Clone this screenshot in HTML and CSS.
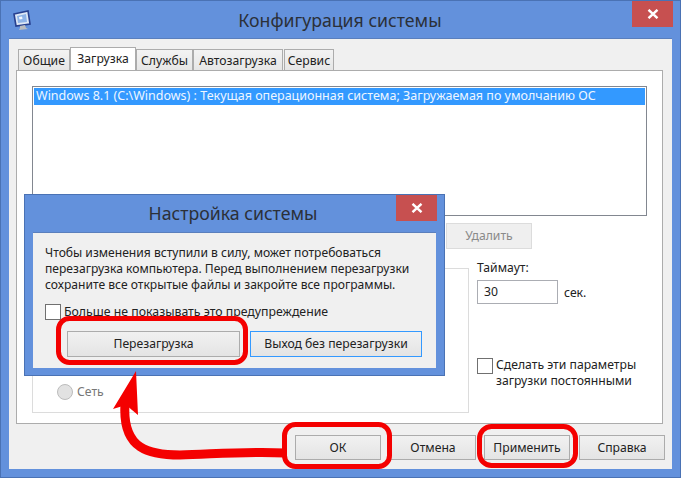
FILE: index.html
```html
<!DOCTYPE html>
<html lang="ru">
<head>
<meta charset="utf-8">
<title>Конфигурация системы</title>
<link rel="stylesheet" href="styles.css">
</head>
<body>
<div class="desktop">
  <div class="window">
    <div class="titlebar">
      <svg class="app-icon" width="18" height="22" viewBox="0 0 18 22">
        <path d="M1 5 L15 2 L17 15 L3 17 Z" fill="#dfe8f5" stroke="#27408f" stroke-width="1.6"/>
        <path d="M4 7 L13 5 L14 13 L5 14 Z" fill="#8fb4e8"/>
        <path d="M6 8 L9 7.5 L9.5 10 L6.5 10.5 Z" fill="#f4f8ff"/>
        <path d="M7 17 L12 16 L13 19 L15 20 L6 21 L7 19 Z" fill="#b9bcc0"/>
      </svg>
      <div class="title">Конфигурация системы</div>
      <div class="close close-main"><svg width="12" height="10" viewBox="0 0 12 10"><path d="M1.5 .8 L10.5 9.2 M10.5 .8 L1.5 9.2" stroke="#fff" stroke-width="2.4"/></svg></div>
    </div>
    <div class="client">
      <div class="tabs">
        <div class="tab tab-general">Общие</div>
        <div class="tab tab-active">Загрузка</div>
        <div class="tab tab-services">Службы</div>
        <div class="tab tab-startup">Автозагрузка</div>
        <div class="tab tab-tools">Сервис</div>
      </div>
      <div class="page">
        <div class="listbox">
          <div class="list-item">Windows 8.1 (C:\Windows) : Текущая операционная система; Загружаемая по умолчанию ОС</div>
        </div>
        <div class="list-actions">
          <div class="btn btn-delete">Удалить</div>
        </div>
        <div class="options">
          <div class="group">
            <div class="radio-row"><span class="radio"></span><span class="muted">Сеть</span></div>
          </div>
          <div class="side">
            <div class="timeout-label">Таймаут:</div>
            <div class="timeout-row">
              <div class="input">30</div>
              <span>сек.</span>
            </div>
            <div class="persist">
              <span class="check"></span>
              <span class="persist-text">Сделать эти параметры<br>загрузки постоянными</span>
            </div>
          </div>
        </div>
      </div>
      <div class="footer">
        <div class="btn btn-foot">ОК</div>
        <div class="btn btn-foot">Отмена</div>
        <div class="btn btn-foot">Применить</div>
        <div class="btn btn-foot">Справка</div>
      </div>
    </div>
  </div>

  <div class="dialog">
    <div class="dialog-title">
      <div class="dialog-caption">Настройка системы</div>
      <div class="close close-dialog"><svg width="12" height="10" viewBox="0 0 12 10"><path d="M1.5 .8 L10.5 9.2 M10.5 .8 L1.5 9.2" stroke="#fff" stroke-width="2.4"/></svg></div>
    </div>
    <div class="dialog-client">
      <p class="message">Чтобы изменения вступили в силу, может потребоваться<br>перезагрузка компьютера. Перед выполнением перезагрузки<br>сохраните все открытые файлы и закройте все программы.</p>
      <div class="dont-show"><span class="check"></span><span>Больше не показывать это предупреждение</span></div>
      <div class="dialog-buttons">
        <div class="btn btn-dialog">Перезагрузка</div>
        <div class="btn btn-dialog btn-focus">Выход без перезагрузки</div>
      </div>
    </div>
  </div>

  <svg class="annotations" width="681" height="478" viewBox="0 0 681 478">
    <g fill="none" stroke="#f40000" stroke-width="5">
      <rect x="284.5" y="424.5" width="105" height="42" rx="11"/>
      <rect x="479.5" y="426.5" width="96" height="39" rx="12"/>
      <rect x="58.5" y="318.5" width="187" height="44" rx="11"/>
      <path d="M285 453 C250 451 215 454 180 455 C150 455 122 450 125 404" stroke-width="9"/>
    </g>
    <path d="M136 371 L113 409 L126 405 L138 415 Z" fill="#f40000"/>
  </svg>
</div>
</body>
</html>
```
FILE: styles.css
```css
* { box-sizing: border-box; }
html, body { margin: 0; padding: 0; }
body { width: 681px; height: 478px; overflow: hidden; font-family: "Noto Sans", "Open Sans", sans-serif; font-size: 12px; color: #222; }
.desktop { position: relative; width: 681px; height: 478px; background: #6391dc; }
.window { display: flex; flex-direction: column; width: 681px; height: 478px; border: 1px solid #4a72b4; }
.titlebar { position: relative; display: flex; align-items: center; height: 37px; flex: none; }
.app-icon { position: absolute; left: 12px; top: 8px; }
.title { flex: 1; text-align: center; font-size: 17.7px; line-height: 37px; color: #2b3038; padding-top: 2px; padding-right: 1px; }
.close { display: flex; align-items: center; justify-content: center; background: #c75050; position: absolute; }
.close-main { left: 631px; top: 0; width: 41px; height: 26px; }
.client { margin: 0 8px 9px 8px; flex: 1; background: #f0f0f0; border-top: 1px solid #5a7fbd; padding: 8px 9px 9px 7px; display: flex; flex-direction: column; }
.tabs { display: flex; height: 23px; flex: none; align-items: flex-end; padding-left: 2px; }
.tab { height: 21px; flex: none; border: 1px solid #acacac; border-bottom: 0; margin-right: 1px; background: linear-gradient(#f3f3f3, #e6e6e6); display: flex; align-items: center; justify-content: center; font-size: 12.2px; }
.tab-general { width: 52px; }
.tab-active { width: 66px; height: 23px; background: #fff; margin-left: -1px; margin-right: 0; padding-bottom: 2px; }
.tab-services { width: 57px; margin-right: 0; }
.tab-startup { width: 90px; }
.tab-tools { width: 50px; }
.page { background: #fff; border: 1px solid #acacac; height: 354px; padding: 15px; flex: none; display: flex; flex-direction: column; }
.listbox { height: 130px; flex: none; border: 1px solid #828790; padding: 1px; }
.list-item { background: #3399ff; color: #eef6ff; height: 17px; line-height: 16px; font-size: 12.5px; padding-left: 2px; }
.list-actions { display: flex; justify-content: flex-end; padding-right: 115px; margin-top: 7px; flex: none; }
.btn { display: flex; flex: none; align-items: center; justify-content: center; border: 1px solid #acacac; background: linear-gradient(#f1f1f1, #e4e4e4); font-size: 12.2px; }
.btn-delete { width: 86px; height: 26px; color: #8a8a8a; background: #efefef; border-color: #dcdcdc; padding-bottom: 1px; }
.options { display: flex; flex: 1; margin-top: 19px; min-height: 0; }
.group { width: 437px; height: 145px; border: 1px solid #dcdcdc; display: flex; flex-direction: column; justify-content: flex-end; padding: 0 0 12px 24px; flex: none; }
.radio-row { display: flex; align-items: center; gap: 4px; }
.radio { width: 16px; height: 16px; border-radius: 50%; background: #e2e2e2; border: 1px solid #bcbcbc; flex: none; }
.muted { color: #777; font-size: 12.2px; }
.side { margin-left: 8px; display: flex; flex-direction: column; font-size: 12.2px; }
.timeout-label { line-height: 16px; height: 11px; margin-top: -8px; }
.timeout-row { display: flex; align-items: center; gap: 6px; margin-top: 9px; }
.input { width: 81px; height: 24px; border: 1px solid #abadb3; background: #fff; line-height: 22px; padding-left: 6px; }
.persist { display: flex; gap: 3px; margin-top: 54px; line-height: 16px; }
.check { width: 16px; height: 16px; flex: none; border: 1px solid #707070; background: #fff; display: block; }
.persist-text { display: block; margin-top: -1px; }
.footer { display: flex; gap: 9px; margin-top: 11px; padding-left: 279px; flex: none; }
.btn-foot { width: 86px; height: 25px; }
.btn-foot:nth-child(2) { margin-right: -1px; margin-left: 0; }
.dialog { position: absolute; left: 24px; top: 194px; width: 421px; height: 182px; background: #6391dc; border: 1px solid #4a72b4; display: flex; flex-direction: column; }
.dialog-title { position: relative; height: 37px; flex: none; }
.dialog-caption { text-align: center; font-size: 17.7px; line-height: 36px; color: #2b3038; padding-right: 3px; }
.close-dialog { left: 371px; top: 0; width: 41px; height: 26px; }
.dialog-client { margin: 0 8px; height: 136px; background: #f0f0f0; padding: 12px 12px 0 12px; border-top: 1px solid #5a7fbd; }
.message { margin: 0; line-height: 16px; font-size: 12.1px; }
.dont-show { display: flex; align-items: center; gap: 3px; margin-top: 10px; font-size: 12.3px; }
.dialog-buttons { display: flex; gap: 10px; padding-left: 22px; margin-top: 11px; }
.btn-dialog { width: 173px; height: 26px; padding-bottom: 1px; }
.btn-focus { border-color: #3399ff; width: 172px; }
.annotations { position: absolute; left: 0; top: 0; pointer-events: none; }
```
